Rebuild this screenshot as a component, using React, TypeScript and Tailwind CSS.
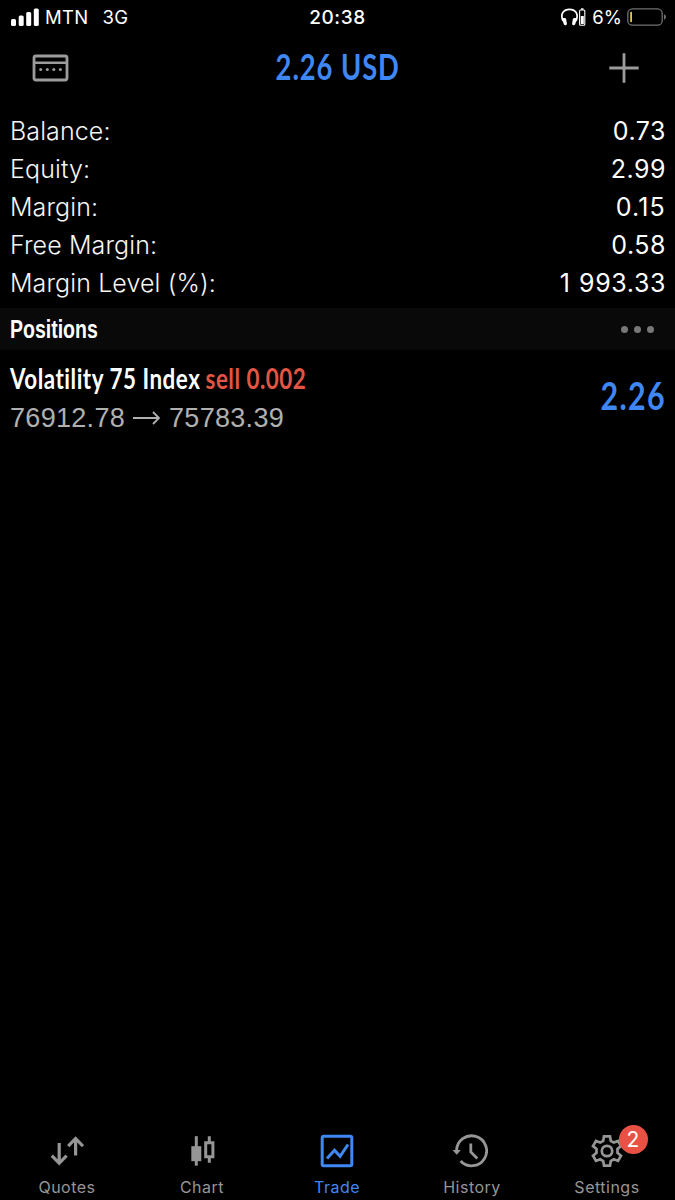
import type { ReactNode } from "react";

const summary = [
  { label: "Balance:", value: "0.73", valueClass: "-mr-[1px] tracking-[0.5px]" },
  { label: "Equity:", value: "2.99", valueClass: "-mr-[1px] tracking-[0.5px]" },
  { label: "Margin:", value: "0.15", valueClass: "-mr-[1px] tracking-[1.2px]" },
  { label: "Free Margin:", value: "0.58", valueClass: "-mr-[1px] tracking-[0.5px]" },
  { label: "Margin Level (%):", value: "1 993.33", valueClass: "-mr-[1px] tracking-[0.6px] [word-spacing:1px]" },
];

function StatusBar() {
  return (
    <div className="grid h-9 grid-cols-3 items-center pl-[11px] pr-[8px] text-white">
      <div className="flex items-center text-[18.5px] leading-[22px]">
        <svg className="mr-[6px] mt-[-3px] shrink-0" width="28" height="18" viewBox="0 0 28 18" fill="currentColor">
          <rect x="0" y="11" width="5" height="7" rx="1.5" />
          <rect x="7.7" y="7.5" width="5" height="10.5" rx="1.5" />
          <rect x="15.2" y="4" width="5" height="14" rx="1.5" />
          <rect x="22.8" y="0.5" width="5" height="17.5" rx="1.5" />
        </svg>
        <span className="-mt-[2px] tracking-[0.3px]">MTN</span>
        <span className="-mt-[2px] ml-[14px] tracking-[0.3px]">3G</span>
      </div>
      <div className="-ml-[3px] text-center text-[19px] font-medium leading-[22px] tracking-[0.6px]">20:38</div>
      <div className="-mt-[3px] flex items-center justify-end">
        <svg width="17" height="18" viewBox="0 0 17 18" fill="none">
          <path d="M2 13C-1.2 5.5 3 1.3 8.5 1.3S18.2 5.5 15 13" stroke="white" strokeWidth="1.7" />
          <path d="M1.2 11.2c0-1.4 3.6-2 4 0l.7 4.500c.1 1.600-2.200 2.100-3 .7zM15.800 11.200c0-1.400-3.600-2-4 0l-.7 4.500c-.1 1.600 2.200 2.100 3 .7z" fill="white" />
        </svg>
        <svg className="ml-[1px]" width="7" height="18" viewBox="0 0 7 18" fill="none">
          <rect x="0.6" y="2" width="5.2" height="15.2" rx="1" stroke="white" strokeWidth="1.1" />
          <rect x="2" y="0.3" width="2.5" height="1.5" fill="white" />
          <rect x="1.8" y="8" width="3" height="8" fill="white" />
        </svg>
        <span className="ml-[6px] text-[18.5px] leading-[22px]">6%</span>
        <svg className="ml-[5px]" width="40" height="18" viewBox="0 0 40 18" fill="none">
          <rect x="0.8" y="0.8" width="34.4" height="16.4" rx="4.5" stroke="#707070" strokeWidth="1.3" />
          <rect x="3.2" y="3.7" width="1.8" height="10.6" rx="0.8" fill="#e5c94c" />
          <path d="M37 6.3c2.6.8 2.6 4.6 0 5.4z" fill="#707070" />
        </svg>
      </div>
    </div>
  );
}

function Header() {
  return (
    <header className="grid h-16 grid-cols-3 items-center pl-8 pr-9">
      <svg width="37" height="28" viewBox="0 0 37 28" fill="none">
        <rect x="2" y="2" width="33" height="24" rx="2" stroke="#9b9b9b" strokeWidth="2.8" />
        <path d="M2 8.8h33" stroke="#9b9b9b" strokeWidth="2.6" />
        <g fill="#9b9b9b">
          <circle cx="8.7" cy="15.6" r="1.5" />
          <circle cx="15.3" cy="15.6" r="1.5" />
          <circle cx="21.8" cy="15.6" r="1.5" />
          <circle cx="28.4" cy="15.6" r="1.5" />
        </g>
      </svg>
      <h1 className="-mt-[5px] ml-[5px] flex justify-center">
        <span className="scale-x-[0.76] whitespace-nowrap font-['Lato'] text-[36px] font-bold leading-9 tracking-[1.2px] text-[#3f87f5]">
          2.26 USD
        </span>
      </h1>
      <svg className="justify-self-end" width="30" height="30" viewBox="0 0 30 30" stroke="#9b9b9b" strokeWidth="2.8">
        <path d="M15 .3v29.4M.3 15h29.4" />
      </svg>
    </header>
  );
}

function QuotesIcon() {
  return (
    <svg className="-ml-[2px]" width="34" height="34" viewBox="0 0 34 34" fill="none" stroke="currentColor" strokeWidth="3.2">
      <path d="M9.2 9v20.500M1.800 21.600l7.400 7.700 7.400-7.700" />
      <path d="M25.600 21.500V4.300M18.200 12.200l7.400-7.700 7.400 7.700" />
    </svg>
  );
}

function ChartIcon() {
  return (
    <svg width="34" height="34" viewBox="0 0 34 34" fill="none" stroke="currentColor">
      <path d="M10.3 2.2v29.5" strokeWidth="3" />
      <path d="M5.3 12.200h10v15h-10z" fill="currentColor" stroke="none" />
      <path d="M23.3 2.2V8M23.3 23.5v5.2" strokeWidth="3" />
      <path d="M19.7 8.7h7.2v14h-7.2z" strokeWidth="3" />
    </svg>
  );
}

function TradeIcon() {
  return (
    <svg className="-ml-[2px]" width="34" height="34" viewBox="0 0 34 34" fill="none" stroke="currentColor" strokeWidth="3">
      <rect x="2.2" y="2.2" width="29.6" height="29.6" rx="1.5" />
      <path d="M7 24.5l7.5-8.2 5.6 6L28 10.5" />
    </svg>
  );
}

function HistoryIcon() {
  return (
    <svg className="-ml-[5px]" width="36" height="34" viewBox="0 0 36 34" fill="none" stroke="currentColor" strokeWidth="2.8">
      <path d="M4.6 16.6A15 15 0 1 1 8.6 27" />
      <path d="M.5 16h8.4l-4.2 4.7z" fill="currentColor" stroke="none" />
      <path d="M18.8 9.4V18l6.5 6.4" />
    </svg>
  );
}

function SettingsIcon() {
  return (
    <svg className="-ml-[2px]" width="34" height="34" viewBox="0 0 34 34" fill="none" stroke="currentColor" strokeWidth="2.7">
      <path d="M14 2.3h6l.8 4.5 3 1.7 4.2-1.6 3 5.2-3.5 2.9v3.8l3.5 2.9-3 5.2-4.2-1.6-3 1.8-.8 4.500h-6l-.8-4.500-3-1.800L6 26.900l-3-5.200 3.500-2.900V15L3 12.100l3-5.200 4.200 1.600 3-1.700z" />
      <circle cx="17" cy="17" r="5.2" />
    </svg>
  );
}

const tabs: { name: string; icon: ReactNode; badge?: number; active?: boolean }[] = [
  { name: "Quotes", icon: <QuotesIcon /> },
  { name: "Chart", icon: <ChartIcon /> },
  { name: "Trade", icon: <TradeIcon />, active: true },
  { name: "History", icon: <HistoryIcon /> },
  { name: "Settings", icon: <SettingsIcon />, badge: 2 },
];

function TabBar() {
  return (
    <nav className="mt-auto grid h-[70px] grid-cols-5">
      {tabs.map((tab) => (
        <div
          key={tab.name}
          className={`flex flex-col items-center pt-1 ${tab.active ? "text-[#3f87f5]" : "text-[#969696]"}`}
        >
          <div className="relative">
            {tab.icon}
            {tab.badge && (
              <span className="absolute left-[27px] top-[-9px] flex size-[29px] items-center justify-center rounded-full bg-[#ea5145] text-[21px] leading-none text-white">
                {tab.badge}
              </span>
            )}
          </div>
          <span className="-ml-[1px] mt-[9px] text-[16px] leading-5 tracking-[0.5px]">{tab.name}</span>
        </div>
      ))}
    </nav>
  );
}

export default function App() {
  return (
    <div className="flex h-[1200px] w-[675px] flex-col overflow-hidden bg-black font-['Inter',sans-serif]">
      <StatusBar />
      <Header />

      <section className="flex flex-col px-[10px] pb-[6px] pt-3 text-[25px] leading-[38px]">
        {summary.map((row) => (
          <div key={row.label} className="flex justify-between text-[#f5f5f5]">
            <span className="font-[350] tracking-[0.1px]">{row.label}</span>
            <span className={`text-white ${row.valueClass}`}>{row.value}</span>
          </div>
        ))}
      </section>

      <div className="flex h-[42px] items-center justify-between bg-[#090909] pl-[10px] pr-[21px]">
        <h2 className="mt-[2px] origin-left scale-x-[0.78] font-['Liberation_Sans'] text-[25px] font-bold text-white">
          Positions
        </h2>
        <div className="flex gap-[6px]">
          <span className="size-[7px] rounded-full bg-[#777]" />
          <span className="size-[7px] rounded-full bg-[#777]" />
          <span className="size-[7px] rounded-full bg-[#777]" />
        </div>
      </div>

      <div className="flex items-center justify-between px-[10px] pt-[9px]">
        <div>
          <div className="origin-left scale-x-[0.8] whitespace-nowrap font-['Lato'] text-[28px] font-bold leading-[39px] tracking-[0.65px] text-white">
            Volatility 75 Index <span className="-ml-[1px] text-[#e25544]">sell 0.002</span>
          </div>
          <div className="flex items-center font-['Liberation_Sans'] text-[27px] leading-[40px] tracking-[0.3px] text-[#b0b0b0]">
            <span>76912.78</span>
            <svg className="mx-[8px]" width="28" height="14" viewBox="0 0 28 14" fill="none" stroke="currentColor" strokeWidth="1.8">
              <path d="M0 7h26M20 1l6 6-6 6" />
            </svg>
            <span>75783.39</span>
          </div>
        </div>
        <div className="-mr-[1px] -mt-[8px] origin-right scale-x-[0.8] font-['Lato'] text-[38px] font-bold leading-none tracking-[1.7px] text-[#3f87f5]">
          2.26
        </div>
      </div>

      <TabBar />
    </div>
  );
}
